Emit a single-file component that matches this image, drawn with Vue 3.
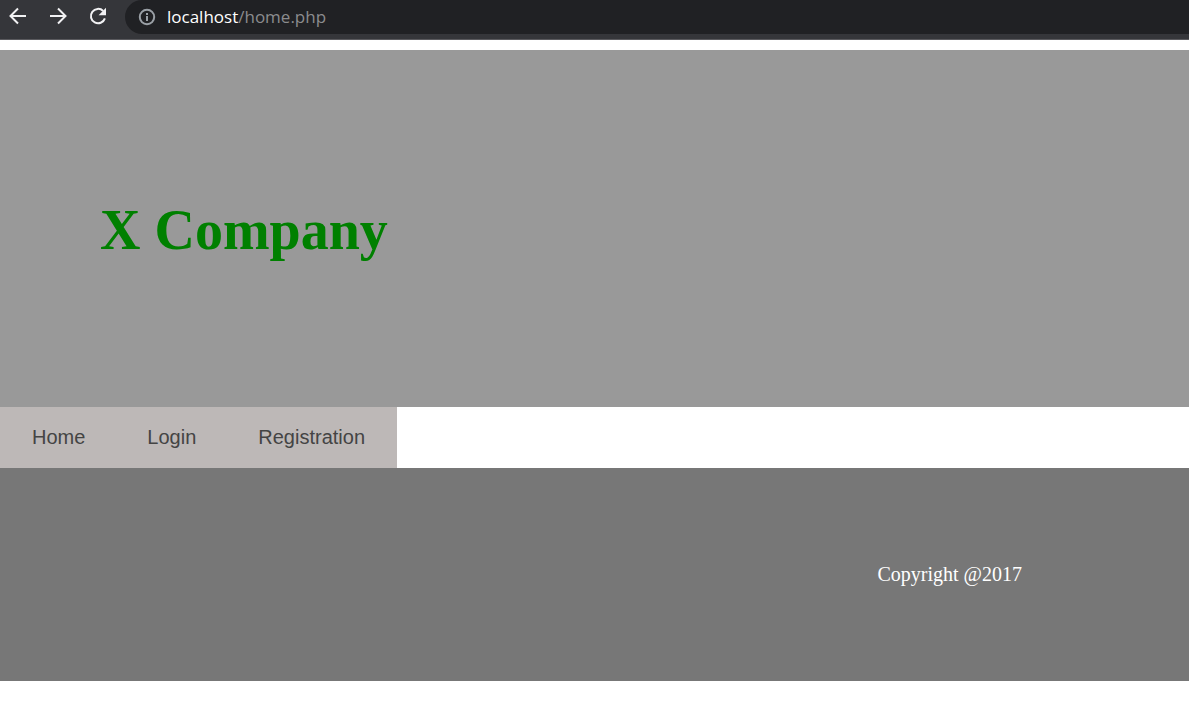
<script setup>
const links = [
  { label: 'Home', href: '#home' },
  { label: 'Login', href: '#login' },
  { label: 'Registration', href: '#registration' },
]
</script>

<template>
  <div class="toolbar">
    <button class="tool" type="button" aria-label="Back">
      <svg viewBox="0 0 20 20"><path d="M18 10H3M10 2.5L2.5 10l7.5 7.5" /></svg>
    </button>
    <button class="tool" type="button" aria-label="Forward">
      <svg viewBox="0 0 20 20"><path d="M2 10h15M10 2.5l7.5 7.5-7.5 7.5" /></svg>
    </button>
    <button class="tool" type="button" aria-label="Reload">
      <svg viewBox="0 0 20 20">
        <path d="M16.9 12.4A7.2 7.2 0 1 1 15.2 5" />
        <path class="solid" d="M18 1.8v7.4h-7.4z" />
      </svg>
    </button>
    <div class="address">
      <svg class="info" viewBox="0 0 18 18">
        <circle cx="9" cy="9" r="7.2" />
        <path d="M9 8v5M9 5v2" />
      </svg>
      <span class="url">localhost<span class="path">/home.php</span></span>
    </div>
  </div>
  <header class="banner">
    <h1>X Company</h1>
  </header>
  <nav class="menu">
    <a v-for="link in links" :key="link.label" :href="link.href">{{ link.label }}</a>
  </nav>
  <footer class="footer">
    <p>Copyright @2017</p>
  </footer>
</template>

<style>
body {
  background: #fff;
}
</style>

<style scoped>
.toolbar {
  display: flex;
  align-items: flex-start;
  box-sizing: border-box;
  height: 40px;
  padding-left: 1px;
  border-bottom: 1px solid #5a5a5e;
  background: #35363a;
}
.tool {
  display: flex;
  justify-content: center;
  align-items: center;
  width: 40px;
  height: 32px;
  margin: 0;
  padding: 0 6px 0 0;
  border: 0;
  background: none;
}
.tool svg {
  width: 20px;
  height: 20px;
  fill: none;
  stroke: #f1f1f3;
  stroke-width: 2;
}
.tool .solid {
  fill: #f1f1f3;
  stroke: none;
}
.address {
  display: flex;
  flex: 1;
  align-items: center;
  gap: 11px;
  height: 34px;
  margin-left: 4px;
  padding-left: 13px;
  border-radius: 17px 0 0 17px;
  background: #202124;
}
.info {
  width: 18px;
  height: 18px;
  fill: none;
  stroke: #9aa0a6;
  stroke-width: 2;
}
.url {
  color: #fff;
  font: 17px/24px "Open Sans", "Noto Sans", sans-serif;
}
.path {
  color: #8b8c8e;
}
.banner {
  margin-top: 10px;
  padding: 148px 100px 145px;
  background: #999;
}
h1 {
  margin: 0;
  color: green;
  font: bold 56px/64px "Liberation Serif", "Times New Roman", serif;
}
.menu {
  display: flex;
  gap: 62px;
  width: fit-content;
  padding: 0 32px;
  background: #bdb8b7;
}
.menu a {
  color: #444;
  font: 20px/61px "Liberation Sans", Arial, sans-serif;
  text-decoration: none;
}
.footer {
  padding: 94px 167px 95px;
  background: #777;
}
.footer p {
  margin: 0;
  color: #fff;
  font: 20px/24px "Liberation Serif", "Times New Roman", serif;
  text-align: right;
}
</style>
